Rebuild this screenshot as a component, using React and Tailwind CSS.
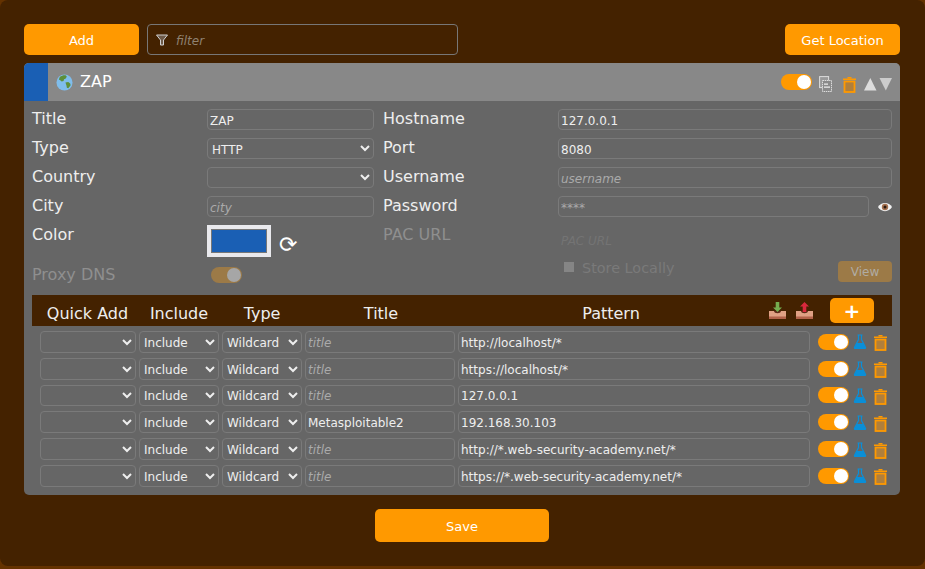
// 프록시 설정 화면
const inputClass = "h-full w-full min-w-0 rounded-[4px] border border-[#7a7a7a] bg-[#666] px-[2px] pt-[2px] text-[12px] text-[#eee] outline-none placeholder:italic placeholder:text-[#aaa]";
const selectClass = "h-full w-full min-w-0 rounded-[4px] border border-[#7a7a7a] bg-[#666] pt-[2px] text-[12px] text-[#eee] outline-none";
const buttonClass = "rounded-[5px] bg-[#ff9900] pt-[2px] text-[13px] text-white";

const patterns = [
  { title: "", pattern: "http://localhost/*" },
  { title: "", pattern: "https://localhost/*" },
  { title: "", pattern: "127.0.0.1" },
  { title: "Metasploitable2", pattern: "192.168.30.103" },
  { title: "", pattern: "http://*.web-security-academy.net/*" },
  { title: "", pattern: "https://*.web-security-academy.net/*" },
];

const Toggle = ({ dim }) => (
  <span className={`flex h-4 w-[31px] shrink-0 items-center justify-end rounded-full pr-[1px] ${dim ? "bg-[#9c7a47]" : "bg-[#ff9900]"}`}>
    <span className={`h-[14px] w-[14px] rounded-full ${dim ? "bg-[#a6a6a6]" : "bg-white"}`} />
  </span>
);

const Trash = ({ className }) => (
  <svg viewBox="0 0 13 16" className={className}>
    <path d="M4.500 0h4v1.500h-4z" fill="#ff9900" />
    <path d="M0 1.500h13v1.500H0z" fill="#ff9900" />
    <rect x="1.500" y="4.500" width="10" height="10.500" fill="#b07f3c" stroke="#ff9900" strokeWidth="1.800" />
  </svg>
);

const Flask = () => (
  <svg viewBox="0 0 14 15" className="h-[15px] w-[14px]">
    <path d="M4.500 1h5M5.500 1v4.500L1.500 13.200c-.3.600 0 1.300.8 1.300h9.400c.8 0 1.100-.7.8-1.300L8.500 5.500V1" fill="none" stroke="#0a8fd8" strokeWidth="1.200" />
    <path d="M3.800 9h6.400l2.600 5.500H1.200z" fill="#0a8fd8" />
  </svg>
);

const Tray = ({ up }) => (
  <svg viewBox="0 0 17 17" className="h-[17px] w-[17px]">
    <path d="M0 9h17v8H0z" fill="#e0a184" />
    <path d="M0 14.500h17V17H0z" fill="#b2634a" />
    <path d="M5 9c0 3 7 3 7 0z" fill="#5c2a18" />
    {up
      ? <path d="M8.500 0l4.500 4.500h-2.700V10H6.700V4.500H4z" fill="#d8283c" />
      : <path d="M6.700 0h3.600v5.500H13L8.500 10 4 5.500h2.700z" fill="#75ad4f" />}
  </svg>
);

const Globe = () => (
  <svg viewBox="0 0 18 18" className="h-[17px] w-[17px]">
    <circle cx="9" cy="9" r="8.500" fill="#7fbdec" />
    <path d="M4 3.200C6 1.500 9 1 10.500 1.500l1 1.500-1.500 2-1.500.5-.5 2-2 .5-1.500-1.500-1.500-.8z" fill="#5d8f3a" />
    <path d="M10 9l3-.5 2 1.500.5 2-2.500 3-1.500-.5-.5-2.500z" fill="#5d8f3a" />
  </svg>
);

const Eye = () => (
  <svg viewBox="0 0 14 10" className="h-[10px] w-[14px]">
    <path d="M0 5c3-5.500 11-5.500 14 0-3 5.500-11 5.500-14 0z" fill="#f2f2f2" />
    <circle cx="7" cy="5" r="3.200" fill="#a5714f" />
    <circle cx="7" cy="5" r="1.500" fill="#2a1a12" />
  </svg>
);

const Funnel = () => (
  <svg viewBox="0 0 12 12" className="h-3 w-3">
    <path d="M.5 1h11L7.500 6v5h-3V6z" fill="#6e5a48" stroke="#cfcfcf" strokeWidth="1" />
  </svg>
);

const CopyIcon = () => (
  <svg viewBox="0 0 13 16" className="h-4 w-[13px]">
    <rect x=".6" y=".6" width="9" height="11" fill="#999" stroke="#ddd" strokeWidth="1" />
    <rect x="3.500" y="4.500" width="9" height="11" fill="#8a8a8a" stroke="#ddd" strokeWidth="1" strokeDasharray="1.500 .7" />
    <path d="M5 7.500h4v1.200H5zM5 10.500h6v1.200H5z" fill="#eee" />
  </svg>
);

const Field = ({ label, left, children }) => (
  <>
    <div className="h-[29px] text-base leading-[19px] text-[#eee]">{label}</div>
    <div className={`flex h-[21px] items-center ${left ? "pr-[9px]" : ""}`}>{children}</div>
  </>
);

const PatternRow = ({ title, pattern }) => (
  <div className="grid h-[21.800px] grid-cols-[96px_80px_80px_150px_352px_1fr] gap-[3px]">
    <select className={selectClass}><option></option></select>
    <select className={selectClass}><option>Include</option></select>
    <select className={selectClass}><option>Wildcard</option></select>
    <input className={inputClass} placeholder="title" defaultValue={title} />
    <input className={inputClass} defaultValue={pattern} />
    <div className="flex items-center pl-[5px]">
      <Toggle />
      <span className="ml-[4px]"><Flask /></span>
      <Trash className="ml-[7px] mt-[3px] h-[16px] w-[13px]" />
    </div>
  </div>
);

export default function App() {
  return (
    <div className="h-[569px] w-[925px] bg-[#643200]">
      <div className="box-border flex h-[566px] w-[925px] flex-col rounded-[8px] bg-[#442200] pl-[24px] pr-[25px] pt-[24px] font-['DejaVu_Sans',sans-serif]">
        <div className="flex h-[31px] shrink-0 items-stretch">
          <button className={`w-[115px] ${buttonClass}`}>Add</button>
          <div className="ml-[8px] flex w-[311px] items-center rounded-[4px] border border-[#777] pl-[8px]">
            <Funnel />
            <span className="ml-[8px] mt-[2px] text-[12px] italic text-[#8f8170]">filter</span>
          </div>
          <button className={`ml-auto w-[115px] ${buttonClass}`}>Get Location</button>
        </div>

        <div className="mt-[8px] h-[432px] shrink-0 overflow-hidden rounded-[5px] bg-[#666]">
          <div className="flex h-[38px] items-center bg-[#888]">
            <div className="h-full w-[24px] bg-[#1a5fb4]" />
            <div className="ml-[8px]"><Globe /></div>
            <span className="ml-[7px] text-base text-white">ZAP</span>
            <div className="ml-auto flex items-center pr-[8px]">
              <Toggle />
              <span className="ml-[7px] mt-[3px]"><CopyIcon /></span>
              <Trash className="ml-[11px] mt-[5px] h-[16px] w-[13px]" />
              <svg viewBox="0 0 28 13" className="ml-[8px] mt-[4px] h-[13px] w-[28px]">
                <path d="M0 12.500L6.300 0l6.200 12.500z" fill="#ddd" />
                <path d="M15.500 0H28l-6.200 12.500z" fill="#ccc" />
              </svg>
            </div>
          </div>

          <div className="px-[8px] pt-[8px]">
            <div className="grid grid-cols-[175px_176px_175px_334px] auto-rows-[29px]">
              <Field left label="Title"><input className={inputClass} defaultValue="ZAP" /></Field>
              <Field label="Hostname"><input className={inputClass} defaultValue="127.0.0.1" /></Field>
              <Field left label="Type"><select className={selectClass}><option>HTTP</option></select></Field>
              <Field label="Port"><input className={inputClass} defaultValue="8080" /></Field>
              <Field left label="Country"><select className={selectClass}><option></option></select></Field>
              <Field label="Username"><input className={inputClass} placeholder="username" /></Field>
              <Field left label="City"><input className={inputClass} placeholder="city" /></Field>
              <Field label="Password">
                <input className={inputClass} placeholder="****" />
                <span className="ml-[9px] shrink-0"><Eye /></span>
              </Field>
            </div>

            <div className="flex h-[70px]">
              <div className="w-[351px]">
                <div className="flex h-[40px]">
                  <span className="w-[175px] text-base leading-[19px] text-[#eee]">Color</span>
                  <div className="h-[32px] w-[64px] border-[4px] border-[#e9e9ed] bg-[#1a5fb4] outline outline-1 -outline-offset-[5px] outline-[#777]" />
                  <span className="ml-[8px] mt-[6px] text-[22px] leading-[28px] text-white">⟳</span>
                </div>
                <div className="flex h-[20px] items-center">
                  <span className="w-[179px] text-base text-[#8f8f8f]">Proxy DNS</span>
                  <Toggle dim />
                </div>
              </div>
              <div className="flex-1">
                <div className="flex h-[29px]">
                  <span className="w-[175px] text-base leading-[19px] text-[#8f8f8f]">PAC URL</span>
                  <span className="ml-[3px] mt-[7px] text-[12px] italic leading-[18px] text-[#747474]">PAC URL</span>
                </div>
                <div className="flex h-[32px] items-start">
                  <span className="ml-[181px] mt-[8px] h-[10px] w-[10px] bg-[#858585]" />
                  <span className="ml-[8px] mt-[5px] text-[14.400px] leading-[18px] text-[#7a7a7a]">Store Locally</span>
                  <span className="ml-auto mt-[7px] flex h-[21px] w-[54px] items-center justify-center rounded-[4px] bg-[#9c7a47] text-[12px] text-[#b0aca4]">View</span>
                </div>
              </div>
            </div>
          </div>

          <div className="mx-[8px] flex h-[31px] items-end bg-[#442200] text-base text-[#eee]">
            <span className="w-[111px] pb-[2px] text-center leading-[20px]">Quick Add</span>
            <span className="w-[72px] pb-[2px] text-center leading-[20px]">Include</span>
            <span className="w-[94px] pb-[2px] text-center leading-[20px]">Type</span>
            <span className="w-[144px] pb-[2px] text-center leading-[20px]">Title</span>
            <span className="w-[316px] pb-[2px] text-center leading-[20px]">Pattern</span>
            <div className="flex items-center gap-[10px] self-center">
              <Tray />
              <Tray up />
              <span className="ml-[7px] flex h-[25px] w-[44px] items-center justify-center rounded-[5px] bg-[#ff9900] text-[20px] font-bold leading-none text-white">+</span>
            </div>
          </div>

          <div className="flex flex-col gap-[5px] px-[16px] pt-[5px]">
            {patterns.map((p) => <PatternRow key={p.pattern} {...p} />)}
          </div>
        </div>

        <button className={`mx-auto mt-[14px] h-[33px] w-[174px] shrink-0 ${buttonClass}`}>Save</button>
      </div>
    </div>
  );
}
